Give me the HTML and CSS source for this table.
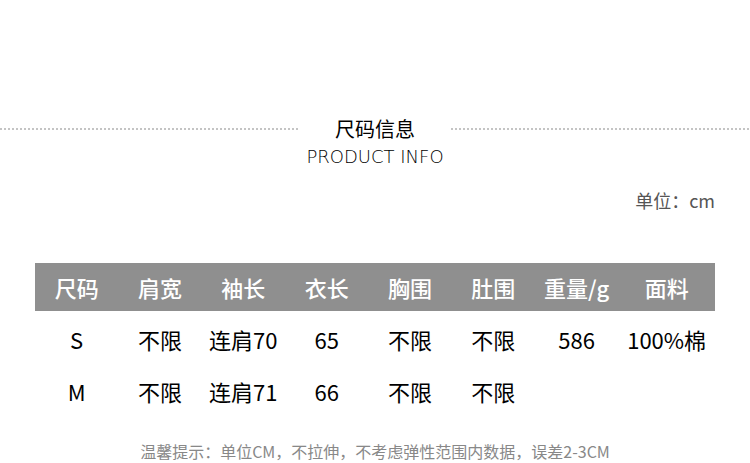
FILE: index.html
```html
<!DOCTYPE html>
<html lang="zh">
<head>
    <meta charset="UTF-8">
    <title>尺码信息</title>
    <link rel="stylesheet" href="styles.css">
</head>
<body>
    <header class="title-block">
        <div class="title-row">
            <span class="dots"></span>
            <h1>尺码信息</h1>
            <span class="dots"></span>
        </div>
        <p class="subtitle">PRODUCT INFO</p>
    </header>

    <section class="size-wrap">
        <p class="unit">单位：cm</p>

        <div class="size-table">
            <div class="row head">
                <span>尺码</span><span>肩宽</span><span>袖长</span><span>衣长</span>
                <span>胸围</span><span>肚围</span><span>重量/g</span><span>面料</span>
            </div>
            <div class="row">
                <span>S</span><span>不限</span><span>连肩70</span><span>65</span>
                <span>不限</span><span>不限</span><span>586</span><span>100%棉</span>
            </div>
            <div class="row">
                <span>M</span><span>不限</span><span>连肩71</span><span>66</span>
                <span>不限</span><span>不限</span><span></span><span></span>
            </div>
        </div>

        <p class="tip">温馨提示：单位CM，不拉伸，不考虑弹性范围内数据，误差2-3CM</p>
    </section>
</body>
</html>
```

FILE: styles.css
```css
/* base */
body {
    margin: 0;
    background: #fff;
    font-family: "Noto Sans CJK SC", "Noto Sans", sans-serif;
    color: #111;
}

/* title */
.title-block {
    padding-top: 114px;
    text-align: center;
}
.title-row {
    display: flex;
    align-items: center;
    gap: 36px;
}
.dots {
    flex: 1;
    height: 2px;
    background-image: linear-gradient(to right, #c4c4c4 50%, transparent 50%);
    background-size: 4px 2px;
}
.title-row h1 {
    margin: 0;
    font-size: 20px;
    font-weight: 400;
    line-height: 30px;
    color: #000;
}
.subtitle {
    margin: 0;
    font-family: "DejaVu Sans", sans-serif;
    font-weight: 200;
    font-size: 18px;
    line-height: 26px;
    color: #000;
}

/* table */
.size-wrap {
    padding: 0 35px;
}
.unit {
    margin: 15px 0 0;
    text-align: right;
    font-size: 18px;
    line-height: 30px;
    color: #555;
}
.size-table {
    margin-top: 48px;
}
.row {
    display: grid;
    grid-template-columns: repeat(7, 83.33px) 1fr;
    align-items: center;
    height: 52px;
    font-size: 22px;
    text-align: center;
    color: #000;
}
.row.head {
    height: 48px;
    background: #8f8f8f;
    color: #fff;
    font-weight: 500;
    margin-bottom: 2px;
}
.tip {
    margin: 22px 0 0;
    text-align: center;
    font-size: 16px;
    color: #888;
}
```
